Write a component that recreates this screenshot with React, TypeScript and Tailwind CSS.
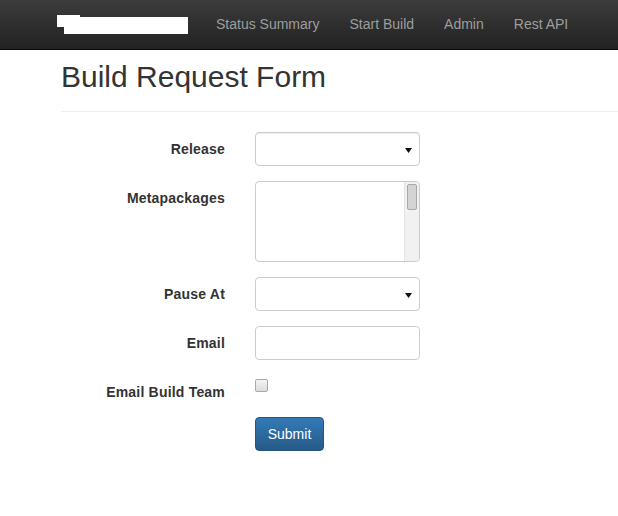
import React from "react";

const font = { fontFamily: '"Liberation Sans", Arial, sans-serif' };

function Arrow() {
  return (
    <svg
      className="pointer-events-none absolute right-[7px] top-[15px]"
      width="7"
      height="5"
      viewBox="0 0 7 5"
    >
      <path d="M0 0 H7 L3.5 5 Z" fill="#111" />
    </svg>
  );
}

function Row({ label, children }: { label: string; children: React.ReactNode }) {
  return (
    <div className="mb-[15px] flex">
      <div className="w-[164px] pt-[7px] text-right text-[14px] font-bold leading-[20px] tracking-[0.2px] text-[#333]">{label}</div>
      <div className="ml-[30px] w-[165px]">{children}</div>
    </div>
  );
}

export default function App() {
  return (
    <div className="min-h-[516px] w-[618px] overflow-hidden bg-white" style={font}>
      <nav className="flex h-[50px] items-start border-b border-[#080808] bg-gradient-to-b from-[#3c3c3c] to-[#222222]">
        <div className="ml-[57px] mt-[15px] w-[131px]">
          <svg width="131" height="19" viewBox="0 0 131 19">
            <path d="M0 0 H23 V2 H131 V19 H7 V12 H0 Z" fill="#fff" />
          </svg>
        </div>
        <div className="ml-[13px] flex text-[14px] leading-[20px] text-[#9d9d9d]">
          <a className="px-[15px] pt-[14px]">Status Summary</a>
          <a className="px-[15px] pt-[14px]">Start Build</a>
          <a className="px-[15px] pt-[14px]">Admin</a>
          <a className="px-[15px] pt-[14px]">Rest API</a>
        </div>
      </nav>

      <div className="ml-[61px]">
        <div className="border-b border-[#eeeeee] pb-[14px] pt-[7px]">
          <h1 className="text-[30px] font-normal leading-[40px] text-[#333]">Build Request Form</h1>
        </div>

        <form className="pt-[20px]">
          <Row label="Release">
            <div className="relative h-[34px] w-[165px] rounded-[4px] border border-[#cccccc] bg-white shadow-[inset_0_1px_1px_rgba(0,0,0,0.075)]">
              <Arrow />
            </div>
          </Row>
          <Row label="Metapackages">
            <div className="relative h-[81px] w-[165px] rounded-[4px] border border-[#cccccc] bg-white">
              <div className="absolute bottom-0 right-0 top-0 w-[15px] rounded-r-[3px] border-l border-[#e3e3e3] bg-[#f1f1f1]">
                <div className="ml-[2px] mt-[2px] h-[26px] w-[10px] rounded-[2px] border border-[#a8a8a8] bg-[#d4d4d4]" />
              </div>
            </div>
          </Row>
          <Row label="Pause At">
            <div className="relative h-[34px] w-[165px] rounded-[4px] border border-[#cccccc] bg-white">
              <Arrow />
            </div>
          </Row>
          <Row label="Email">
            <div className="h-[34px] w-[165px] rounded-[4px] border border-[#cccccc] bg-white" />
          </Row>
          <div className="mb-[15px] flex h-[27px]">
            <div className="w-[164px] pt-[7px] text-right text-[14px] font-bold leading-[20px] tracking-[0.2px] text-[#333]">Email Build Team</div>
            <div className="ml-[30px] pt-[4px]">
              <div className="h-[13px] w-[13px] rounded-[2px] border border-[#a9a9a9] bg-gradient-to-b from-[#f4f4f4] to-[#dcdcdc]" />
            </div>
          </div>
          <div className="ml-[194px]">
            <button
              type="button"
              className="h-[34px] w-[69px] rounded-[4px] border border-[#245580] bg-gradient-to-b from-[#337ab7] to-[#265a88] text-[14px] leading-[20px] text-white"
            >
              Submit
            </button>
          </div>
        </form>
      </div>
    </div>
  );
}
